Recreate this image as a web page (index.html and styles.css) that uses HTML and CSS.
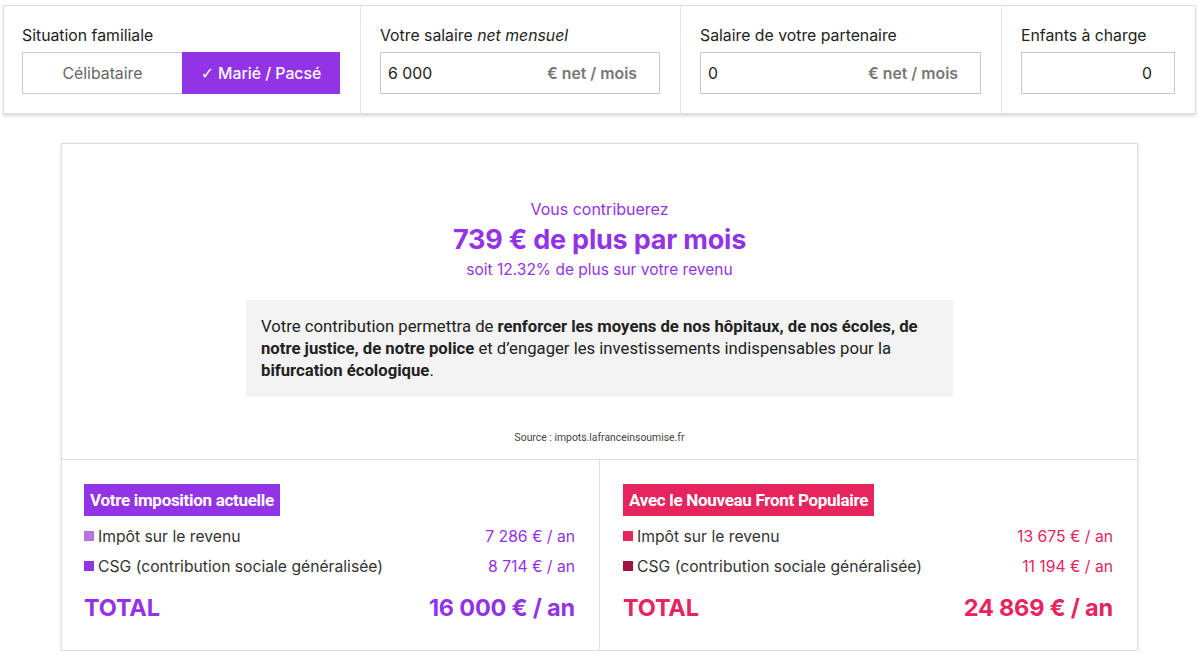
FILE: index.html
```html
<!DOCTYPE html>
<html lang="fr">
<head>
<meta charset="utf-8">
<title>Simulateur</title>
<link rel="stylesheet" href="styles.css">
</head>
<body>
<div class="topbar">
  <div class="field f1">
    <div class="label">Situation familiale</div>
    <div class="toggle">
      <div class="opt">Célibataire</div>
      <div class="opt active"><span class="check">✓</span>Marié / Pacsé</div>
    </div>
  </div>
  <div class="field">
    <div class="label">Votre salaire <em>net mensuel</em></div>
    <div class="input"><span class="val">6 000</span><span class="suf">€ net / mois</span></div>
  </div>
  <div class="field">
    <div class="label">Salaire de votre partenaire</div>
    <div class="input"><span class="val">0</span><span class="suf">€ net / mois</span></div>
  </div>
  <div class="field">
    <div class="label">Enfants à charge</div>
    <div class="input right"><span class="val">0</span></div>
  </div>
</div>

<div class="card">
  <div class="result">
    <div class="r1">Vous contribuerez</div>
    <div class="r2">739 € de plus par mois</div>
    <div class="r3">soit 12.32% de plus sur votre revenu</div>
    <div class="note">Votre contribution permettra de <b>renforcer les moyens de nos hôpitaux, de nos écoles, de notre justice, de notre police</b> et d’engager les investissements indispensables pour la <b>bifurcation écologique</b>.</div>
    <div class="source">Source : impots.lafranceinsoumise.fr</div>
  </div>
  <div class="compare">
    <div class="col purple">
      <div class="badge">Votre imposition actuelle</div>
      <div class="row"><span class="name"><i class="sq sq-a"></i>Impôt sur le revenu</span><span class="amt">7 286 € / an</span></div>
      <div class="row"><span class="name"><i class="sq sq-b"></i>CSG (contribution sociale généralisée)</span><span class="amt">8 714 € / an</span></div>
      <div class="total"><span>TOTAL</span><span>16 000 € / an</span></div>
    </div>
    <div class="col pink">
      <div class="badge">Avec le Nouveau Front Populaire</div>
      <div class="row"><span class="name"><i class="sq sq-a"></i>Impôt sur le revenu</span><span class="amt">13 675 € / an</span></div>
      <div class="row"><span class="name"><i class="sq sq-b"></i>CSG (contribution sociale généralisée)</span><span class="amt">11 194 € / an</span></div>
      <div class="total"><span>TOTAL</span><span>24 869 € / an</span></div>
    </div>
  </div>
</div>
</body>
</html>
```

FILE: styles.css
```css
* { box-sizing: border-box; }
body {
  margin: 0;
  background: #fff;
  font-family: Inter, "Noto Sans", sans-serif;
  color: #222;
}
.topbar {
  margin: 5px 4px 0 3px;
  display: grid;
  grid-template-columns: 356px 320px 321px 1fr;
  border: 1px solid #dedede;
  box-shadow: 0 2px 3px rgba(0,0,0,0.15);
  background: #fff;
}
.field {
  padding: 20px 20px 19px 19px;
  border-left: 1px solid #e4e4e4;
}
.field.f1 { border-left: none; padding-left: 18px; padding-right: 20px; }
.label {
  font-size: 15.8px;
  line-height: 20px;
  color: #222;
  margin-bottom: 6px;
}
.label em { font-style: italic; }
.toggle {
  display: grid;
  grid-template-columns: 159px 1fr;
  height: 42px;
  border: 1px solid #ccc;
}
.opt {
  display: flex;
  align-items: center;
  justify-content: center;
  font-size: 15.8px;
  color: #666;
}
.opt.active {
  background: #9333e6;
  color: #fff;
  font-weight: 500;
  margin: -1px -1px -1px 0;
}
.check {
  font-family: "DejaVu Sans", sans-serif;
  font-size: 16px;
  margin-right: 4px;
}
.input {
  height: 42px;
  border: 1px solid #c8c8c8;
  display: flex;
  align-items: center;
  justify-content: space-between;
  padding: 0 22px 0 7px;
  font-size: 15.8px;
}
.input.right { justify-content: flex-end; }
.val { color: #222; }
.suf { color: #777; font-weight: 600; }

.card {
  margin: 29px 0 0 61px;
  width: 1077px;
  border: 1px solid #dedede;
  box-shadow: 0 1px 3px rgba(0,0,0,0.15);
  background: #fff;
}
.result {
  padding: 55px 0 15px;
  text-align: center;
  border-bottom: 1px solid #dedede;
}
.r1 { color: #9333e6; font-size: 16px; line-height: 20px; }
.r2 { color: #9333e6; font-size: 27px; line-height: 32px; font-weight: 700; margin-top: 5px; letter-spacing: -0.2px; }
.r3 { color: #9333e6; font-size: 15.5px; line-height: 20px; margin-top: 4px; }
.note {
  width: 707px;
  margin: 20px auto 0;
  background: #f3f3f3;
  padding: 16px 15px 15px;
  text-align: left;
  font-family: Roboto, "Liberation Sans", sans-serif;
  font-size: 16.7px;
  line-height: 22px;
  color: #222;
}
.note b { font-weight: 700; }
.source {
  margin-top: 35px;
  font-family: Roboto, "Liberation Sans", sans-serif;
  font-size: 10.4px;
  line-height: 12px;
  color: #444;
}
.compare {
  display: grid;
  grid-template-columns: 537px 1fr;
}
.col {
  padding: 24px 24px 27px 22px;
}
.col.pink {
  border-left: 1px solid #dedede;
  padding-left: 23px;
}
.badge {
  display: inline-block;
  height: 32px;
  line-height: 32px;
  padding: 0 6px;
  color: #fff;
  font-family: Roboto, "Liberation Sans", sans-serif;
  font-weight: 700;
  font-size: 17px;
  letter-spacing: -0.3px;
  margin-bottom: 5px;
}
.row {
  display: flex;
  justify-content: space-between;
  align-items: center;
  height: 30px;
  font-size: 15.7px;
}
.name { color: #333; display: flex; align-items: center; }
.sq { display: inline-block; width: 10px; height: 10px; margin-right: 4px; }
.total {
  display: flex;
  justify-content: space-between;
  margin-top: 12px;
  font-size: 23.5px;
  line-height: 30px;
  font-weight: 700;
  letter-spacing: -0.2px;
}
.purple .badge { background: #9333e6; }
.purple .amt, .purple .total { color: #9333e6; }
.purple .sq-a { background: #b873e2; }
.purple .sq-b { background: #9333e6; }
.pink .badge { background: #e6245e; }
.pink .amt, .pink .total { color: #e6245e; }
.pink .sq-a { background: #e6245e; }
.pink .sq-b { background: #a3123f; }
```
